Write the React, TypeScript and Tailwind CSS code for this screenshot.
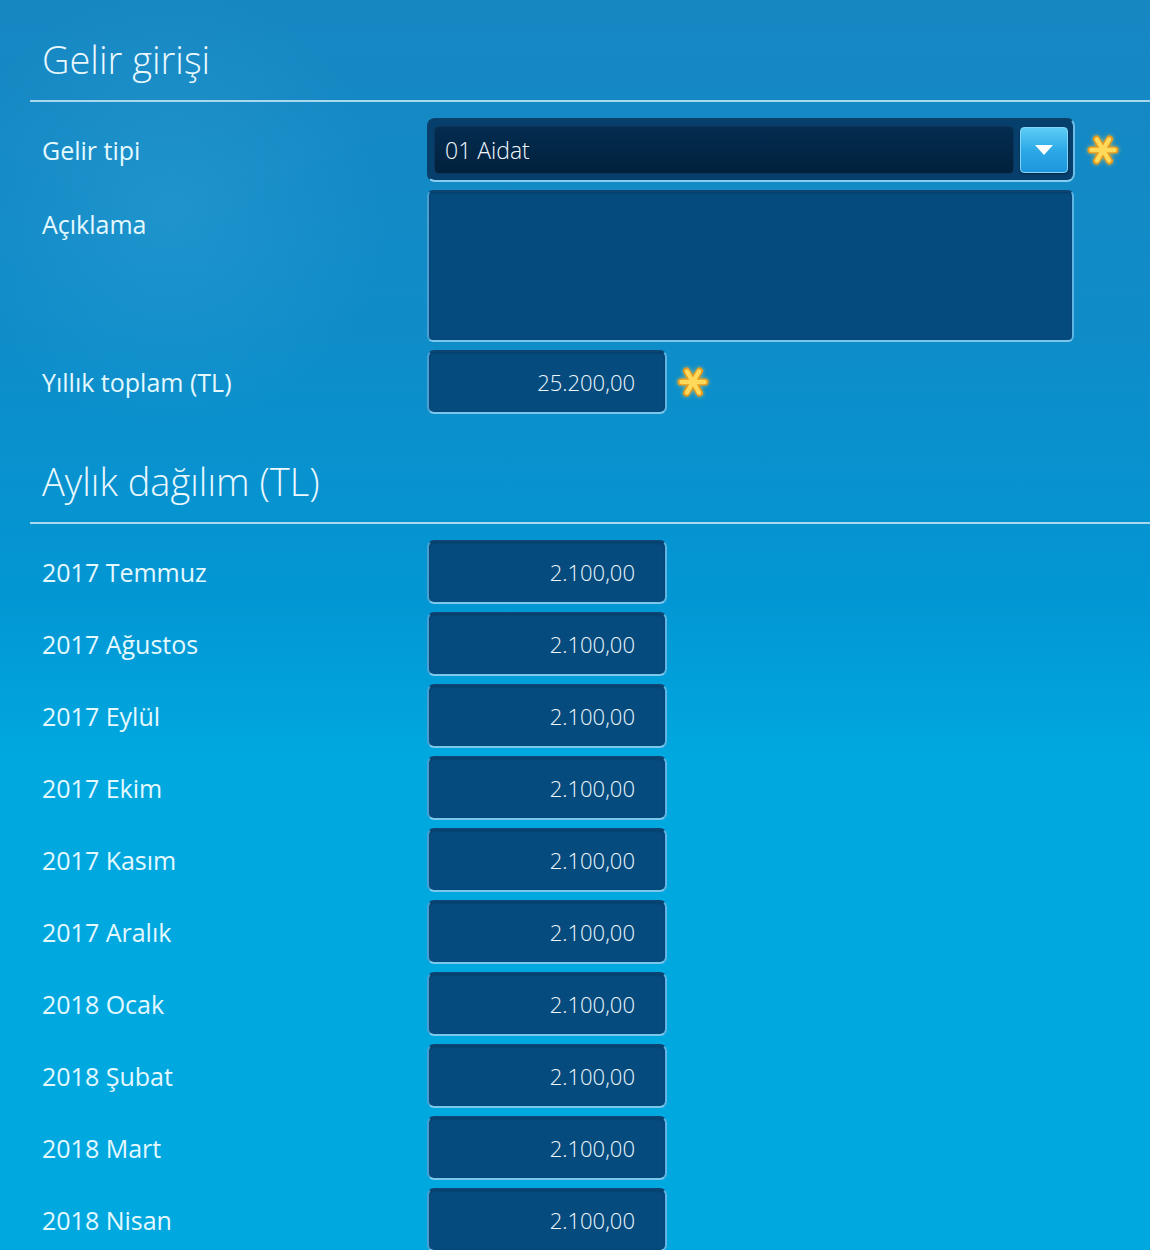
import React from "react";

const months = [
  "2017 Temmuz",
  "2017 Ağustos",
  "2017 Eylül",
  "2017 Ekim",
  "2017 Kasım",
  "2017 Aralık",
  "2018 Ocak",
  "2018 Şubat",
  "2018 Mart",
  "2018 Nisan",
];

function Required() {
  return (
    <svg width="32" height="32" viewBox="0 0 32 32" className="drop-shadow-[0_0_2px_rgba(255,200,60,0.7)]">
      <g stroke="#e89a1c" strokeWidth="7" strokeLinecap="round">
        <line x1="4" y1="16" x2="28" y2="16" />
        <line x1="9.5" y1="5" x2="22.5" y2="27" />
        <line x1="22.5" y1="5" x2="9.5" y2="27" />
      </g>
      <g stroke="#ffd95a" strokeWidth="4.5" strokeLinecap="round">
        <line x1="4.5" y1="16" x2="27.5" y2="16" />
        <line x1="10" y1="5.5" x2="22" y2="26.5" />
        <line x1="22" y1="5.5" x2="10" y2="26.5" />
      </g>
    </svg>
  );
}

function SectionTitle({ children }: { children: React.ReactNode }) {
  return (
    <div className="pl-[30px]">
      <h1 className="pl-3 text-[38px] font-light leading-none text-[#eaf8ff]">{children}</h1>
      <div className="mt-[22px] h-[2px] bg-[#a9d9ef]" />
    </div>
  );
}

function Row({ label, children, labelTop }: { label: string; children: React.ReactNode; labelTop?: boolean }) {
  return (
    <div className={`flex ${labelTop ? "items-start" : "items-center"}`}>
      <div className={`w-[385px] shrink-0 text-[25px] leading-none text-[#e4f9ff] ${labelTop ? "pt-[22px]" : ""}`}>{label}</div>
      {children}
    </div>
  );
}

function AmountBox({ value }: { value: string }) {
  return (
    <div className="flex h-[64px] w-[240px] items-center justify-end rounded-[7px] border-2 border-[#0d4472] border-b-[#7cc7ec] border-r-[#5fb4e2] border-l-[#4a9fd0] bg-[#064b7d] pr-[30px] text-[22px] font-light text-[#eef8ff] shadow-[inset_0_1px_2px_rgba(0,20,50,0.3)]">
      {value}
    </div>
  );
}

export default function App() {
  return (
    <div
      className="relative h-[1250px] w-full overflow-hidden bg-[linear-gradient(to_bottom,#1787c2_0px,#0f8cc8_320px,#0297d4_600px,#00a8e0_760px,#00a8e0_100%)]"
      style={{ fontFamily: '"Open Sans", "Noto Sans", sans-serif' }}
    >
      <div className="pointer-events-none absolute inset-0 bg-[radial-gradient(circle_at_170px_210px,rgba(120,210,250,0.13),rgba(120,210,250,0)_220px)]" />
      <div className="relative pt-[40px]">
        <SectionTitle>Gelir girişi</SectionTitle>

        <div className="mt-[16px] flex flex-col gap-[8px] pl-[42px]">
          <Row label="Gelir tipi">
            <div className="flex items-center gap-[12px]">
              <div className="flex h-[64px] w-[648px] items-center gap-[6px] rounded-[8px] border-2 border-[#0a3f6a] border-b-[#86cdef] border-r-[#6dbde6] bg-[#073f6c] px-[5px]">
                <div className="flex h-[48px] flex-1 items-center rounded-[5px] border border-[#0d3558] bg-[linear-gradient(to_bottom,#032c4f,#01213d)] pl-[10px] text-[23px] font-light text-[#f2f8ff]">
                  01 Aidat
                </div>
                <div className="flex h-[46px] w-[48px] items-center justify-center rounded-[4px] border border-[#7fd4f7] bg-[linear-gradient(to_bottom,#5ccdf5,#2aa6e6_55%,#1f96dc)] shadow-[0_1px_2px_rgba(0,0,0,0.4)]">
                  <svg width="20" height="12" viewBox="0 0 20 12">
                    <path d="M1 1 L19 1 L10 11 Z" fill="#ffffff" />
                  </svg>
                </div>
              </div>
              <Required />
            </div>
          </Row>

          <Row label="Açıklama" labelTop>
            <div className="h-[152px] w-[647px] rounded-[6px] border-2 border-[#0d4472] border-b-[#7cc7ec] border-r-[#5fb4e2] border-l-[#4a9fd0] bg-[#064b7d] shadow-[inset_0_1px_2px_rgba(0,20,50,0.3)]" />
          </Row>

          <Row label="Yıllık toplam (TL)">
            <div className="flex items-center gap-[10px]">
              <AmountBox value="25.200,00" />
              <Required />
            </div>
          </Row>
        </div>

        <div className="mt-[48px]">
          <SectionTitle>Aylık dağılım (TL)</SectionTitle>
        </div>

        <div className="mt-[16px] flex flex-col gap-[8px] pl-[42px]">
          {months.map((m) => (
            <Row key={m} label={m}>
              <AmountBox value="2.100,00" />
            </Row>
          ))}
        </div>
      </div>
    </div>
  );
}
